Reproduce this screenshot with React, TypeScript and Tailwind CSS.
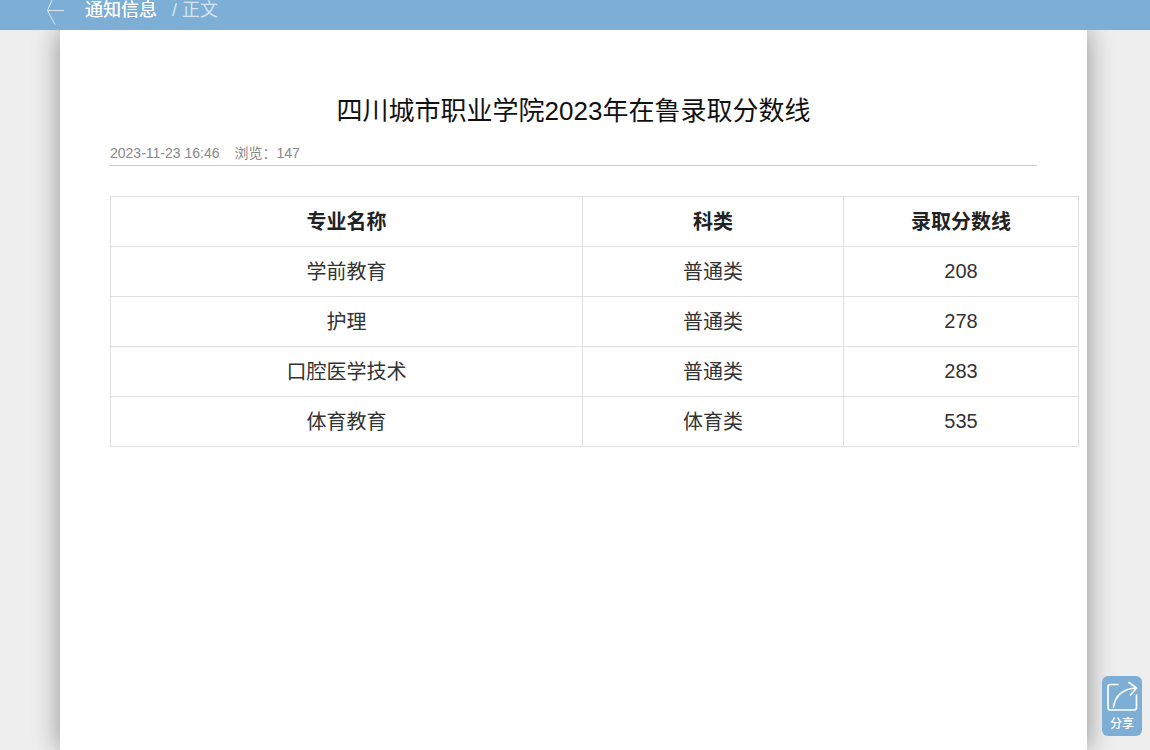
const rows = [
  { name: "专业名称", type: "科类", score: "录取分数线", head: true },
  { name: "学前教育", type: "普通类", score: "208" },
  { name: "护理", type: "普通类", score: "278" },
  { name: "口腔医学技术", type: "普通类", score: "283" },
  { name: "体育教育", type: "体育类", score: "535" },
];

const App = () => {
  return (
    <div className="relative h-[750px] overflow-hidden bg-[#eeeeee] font-['Liberation_Sans','Noto_Sans_CJK_SC',sans-serif]">
      <div className="relative z-10 flex h-[30px] items-start overflow-hidden bg-[#7daed6] pl-[46px]">
        <svg width="18" height="26" viewBox="0 0 18 26" fill="none" stroke="#d9e8f4" strokeWidth="1">
          <path d="M6.5 -1 L1.5 10.5 L9 24.5" />
          <path d="M2 10.5 H18" />
        </svg>
        <span className="ml-[21px] mt-[-2px] text-[18px] leading-[24px] font-normal text-white [text-shadow:0_0_0.4px_#ffffff]">通知信息</span>
        <span className="ml-[15px] mt-[-2px] text-[18px] leading-[24px] text-[#d5e4f1]">/ 正文</span>
      </div>
      <div className="ml-[60px] h-[720px] w-[1027px] bg-white pl-[50px] shadow-[0_0_25px_rgba(0,0,0,0.4)]">
        <h1 className="w-[927px] pt-[63px] text-center text-[26px] leading-[36px] font-normal text-[#111111]">
          四川城市职业学院2023年在鲁录取分数线
        </h1>
        <div className="mt-[13px] flex h-[24px] w-[927px] items-center gap-[15px] border-b border-[#cccccc] text-[14px] text-[#888888]">
          <span>2023-11-23 16:46</span>
          <span>浏览：147</span>
        </div>
        <table className="mt-[30px] w-[969px] table-fixed border-collapse text-center text-[20px] text-[#333333]">
          <colgroup>
            <col className="w-[472px]" />
            <col className="w-[261px]" />
            <col className="w-[235px]" />
          </colgroup>
          <tbody>
            {rows.map((r) => (
              <tr key={r.name} className={r.head ? "h-[50px] font-bold text-[#222222]" : "h-[50px]"}>
                <td className="border border-[#e0e0e0] p-0">{r.name}</td>
                <td className="border border-[#e0e0e0] p-0">{r.type}</td>
                <td className={r.head ? "border border-[#e0e0e0] p-0" : "border border-[#e0e0e0] p-0 pb-[2px]"}>{r.score}</td>
              </tr>
            ))}
          </tbody>
        </table>
      </div>
      <div className="absolute left-[1102px] top-[676px] flex h-[60px] w-[40px] flex-col items-center rounded-[6px] bg-[#7daed6] pt-[5px]">
        <svg width="32" height="32" viewBox="0 0 32 32" fill="none" stroke="#ffffff" strokeWidth="1.7" strokeLinecap="round" strokeLinejoin="round">
          <path d="M12 3.5 H4.5 Q2 3.5 2 6 V26.5 Q2 29 4.5 29 H28 Q30.5 29 30.5 26.5 V14" />
          <path d="M7.5 26 C9 17 15 8 30 7" />
          <path d="M23 1.5 L30.5 7 L24.5 14" />
        </svg>
        <span className="mt-[3px] text-[12px] leading-[16px] font-medium text-white">分享</span>
      </div>
    </div>
  );
};

export default App;
